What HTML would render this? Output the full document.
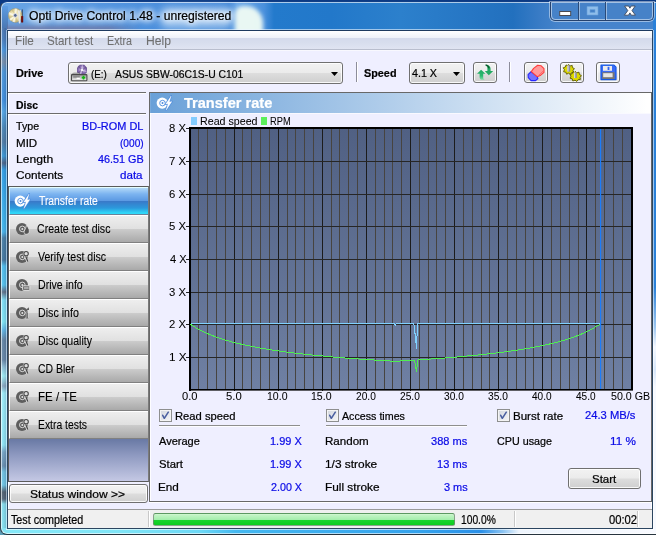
<!DOCTYPE html>
<html lang="en"><head><meta charset="utf-8"><title>Opti Drive Control 1.48 - unregistered</title>
<style>
html,body{margin:0;padding:0}
body{width:656px;height:535px;overflow:hidden;position:relative;font:12px/24px 'Liberation Sans', Arial, sans-serif;color:#000}
div,span,i,svg{position:absolute;box-sizing:border-box}
.t{white-space:pre;line-height:24px;transform-origin:0 50%;font-size:12px;-webkit-text-stroke:0.22px currentColor}
/* --- aero frame --- */
body{background:linear-gradient(180deg,#0b3a84 0,#0b3a84 300px,#5a9cb6 300px)}
#win{left:0;top:1px;width:680px;height:534px;border:1px solid #39454f;border-top-color:#123f86;border-bottom-color:#27343e;border-radius:7px;overflow:hidden;box-shadow:inset 0 0 0 1px rgba(255,255,255,.62);
background:
 linear-gradient(180deg,#5c9ce2 0px,#4a78b4 22px,#4a80c0 34px,#4a98e0 44px,#7890ac 56px,#4a98dc 66px,#3f90e0 94px,#52a8e8 106px,#4a88b8 122px,#4e7ca6 136px,#3a9ad8 150px,#4a6488 157px,#30a0e8 164px,#40b8f0 220px,#48b4ec 226px,#4880a8 232px,#4478a0 254px,#50c0f0 260px,#54c4f0 279px,#607088 286px,#80e0f8 294px,#80e8f8 316px,#60b8e8 324px,#6486a6 334px,#6888a8 354px,#90c0d8 361px,#a0f0f8 370px,#8aa8c0 380px,#a0f0fc 387px,#90e8f8 439px,#78a8c8 446px,#6890b0 460px,#70c4e4 466px,#70c8e8 479px,#506070 486px,#56687a 493px,#88e0f0 498px,#86e4f4 528px) 0 4px/7px 530px no-repeat,
 linear-gradient(180deg,#2a80d8 0,#2a80d8 285px,#9cc6f0 325px,#f4f8ff 345px,#d6e6fa 368px,#f6f9ff 385px,#f8faff 532px) 652px 0/30px 532px no-repeat,
 linear-gradient(90deg,#86e8f8 0,#7fe4f6 120px,#6cd8f6 200px,#44b8f0 235px,#3cacee 330px,#34a2ec 420px,#2a90e8 480px,#8cc4f2 502px,#eef5fd 518px,#f8faff 654px) 0 526px/680px 8px no-repeat,
 linear-gradient(90deg,#6aa6e6 0,#5b9be2 60px,#4a8edc 160px,#4288d8 228px,#6aa8e8 236px,#4a90dc 263px,#237acc 273px,#2278ca 330px,#2c80cc 400px,#2676c4 470px,#2270be 512px,#3a7cc6 540px,#4684cc 560px,#4684cc 656px) 0 0/680px 30px no-repeat,
 #2c7ccc}
#band{left:7px;top:20px;width:135px;height:10px;background:linear-gradient(180deg,rgba(120,115,150,0) 0,rgba(120,115,150,.18) 4px,rgba(118,112,150,.6) 8px,rgba(118,112,150,.6) 10px);-webkit-mask-image:linear-gradient(90deg,#000 0,#000 75%,transparent 100%);mask-image:linear-gradient(90deg,#000 0,#000 75%,transparent 100%)}
#blob2{left:160px;top:7px;width:72px;height:22px;background:rgba(236,248,255,.5);border-radius:8px;filter:blur(4px)}
#blob{left:235px;top:6px;width:28px;height:28px;background:#effbf4;border-radius:8px 17px 0 0;filter:blur(2px);opacity:.96}
#fl2{left:6px;top:30px;width:1px;height:500px;background:rgba(225,240,255,.55)}
#fl3{left:2px;top:28px;width:4px;height:500px;background:linear-gradient(90deg,rgba(255,255,255,.06),rgba(20,30,60,.16))}
#fr2{left:653px;top:30px;width:1px;height:499px;background:rgba(255,255,255,.55)}
#ft2{left:7px;top:29px;width:646px;height:1px;background:rgba(235,245,255,.62)}
#fb2{left:6px;top:529px;width:648px;height:1px;background:rgba(255,255,255,.6)}
#cl{left:7px;top:30px;width:646px;height:499px;border:1px solid #2b4560;border-top-color:#1d3a60;background:#efefff}
#cl:before{content:"";position:absolute;left:0;top:0;width:644px;height:497px;border:1px solid #fff;box-sizing:border-box}
/* caption buttons */
#cap{left:550px;top:2px;width:104px;height:19px;border:1px solid #25426e;border-top:0;border-radius:0 0 5px 5px;background:#4682c8;box-shadow:0 0 0 1px rgba(255,255,255,.45)}
#cap:before{content:"";position:absolute;left:0;top:0;width:102px;height:18px;border:1px solid rgba(255,255,255,.5);border-radius:0 0 4px 4px;box-sizing:border-box}
#cap b{position:absolute;top:0;width:1px;height:18px;background:#2a4a78;box-shadow:1px 0 0 rgba(255,255,255,.45)}
/* menu */
#menu{left:8px;top:31px;width:644px;height:20px;background:linear-gradient(180deg,#fff 0,#fdfdff 1px,#eef1f9 7px,#d4daec 7px,#d8deee 12px,#e0e4f2 18px,#b9bece 18px,#b9bece 19px,#f8f8fe 19px)}
/* buttons */
.btn{border:1px solid #707070;border-radius:3px;background:linear-gradient(180deg,#f2f2f2 0,#ebebeb 48%,#dddddd 52%,#cfcfcf 100%);box-shadow:inset 0 0 0 1px rgba(255,255,255,.85)}
.vsep{width:1px;background:#8c8c9a;box-shadow:1px 0 0 #fff}
.arrow{width:7px;height:4px;background:#000;clip-path:polygon(0 0,100% 0,50% 100%)}
.hl{height:1px;background:#6c6c6c;box-shadow:0 1px 0 #fdfdff}
/* sidebar */
#side{left:8px;top:186px;width:141px;height:296px;border:1px solid #5a5a5a;border-right-color:#7a7a7a;background:linear-gradient(180deg,#6b7ba6 0,#6b7ba6 253px,#8e99c0 268px,#c4c8e4 294px)}
.sb{left:9px;width:139px;height:28px;border-bottom:1px solid #808080;border-left:1px solid #fff;background:linear-gradient(180deg,#eeeeee 0,#eeeeee 1px,#e0e0e0 14px,#cccccc 14px,#a9a9a9 27px);box-shadow:inset 0 1px 0 #fff}
.sb.sel{border-left-color:#c8f0ff;border-bottom-color:#6a8298;background:linear-gradient(180deg,#b6dcfa 0,#b2d8f8 1px,#7cb4f0 7px,#5a98e2 14px,#3a78c8 14px,#2c98dc 21px,#2fd8f8 26px,#2fd8f8 27px);box-shadow:inset 0 1px 0 #e4fdff}
.sb i{left:4px;top:6px;width:18px;height:16px}
/* panel */
#panel{left:149px;top:92px;width:503px;height:410px;border:1px solid #686868;background:#efefff;box-shadow:inset 1px 0 0 rgba(255,255,255,.85),0 1px 0 rgba(255,255,255,.9)}
#phead{left:150px;top:93px;width:501px;height:20px;box-shadow:inset 1px 0 0 rgba(255,255,255,.12),0 1px 0 rgba(255,255,255,.6);background:linear-gradient(90deg,#69a0d8 0,#ffffff 497px)}
.cb{width:13px;height:13px;border:1px solid #8e8f8f;background:linear-gradient(135deg,#d2d6de 0,#f6f6f8 100%);box-shadow:inset 0 0 0 1px #f4f4f4}
.cb svg{left:0;top:0}
/* status */
#status{left:8px;top:509px;width:644px;height:19px;border-top:1px solid #9a9a9a;background:#f0f0f0}
#prog{left:153px;top:513px;width:302px;height:13px;border-radius:2.5px;border:1px solid rgba(120,135,120,.75);background:linear-gradient(180deg,#d6f9d6 0,#c2f5c4 1px,#a6eeae 5.5px,#1ad52e 6px,#0ccc20 11px)}
</style></head>
<body>
<div id="win"></div><div id="band"></div><div id="blob2"></div><div id="blob"></div><div id="fl2"></div><div id="fl3"></div><div id="fr2"></div><div id="fb2"></div><div id="ft2"></div>
<div id="cap"><b style="left:27px"></b><b style="left:54px"></b>
<svg width="102" height="20" viewBox="0 0 102 20" style="left:0;top:-2px">
<rect x="8.7" y="11.5" width="11" height="4" fill="#fff" stroke="#4a4a52" stroke-width="1"/>
<path d="M36 6.5h11v8.5h-11z M39 9.5v3h5v-3z" fill="#8fbdea" fill-rule="evenodd" stroke="#6aa2dc" stroke-width="0.6"/>
<path d="M73.6 6 L77.6 6 L78.9 8.2 L80.2 6 L84.2 6 L81 10.6 L84.4 15.2 L80.3 15.2 L78.9 12.9 L77.5 15.2 L73.4 15.2 L76.8 10.6 Z" fill="#fff" stroke="#3f4a5c" stroke-width="0.9" stroke-linejoin="round"/>
</svg></div>
<svg width="18" height="18" viewBox="0 0 18 18" style="left:8px;top:7px">
<defs><radialGradient id="cd" cx="0.45" cy="0.5" r="0.55"><stop offset="0" stop-color="#fffbe6"/><stop offset="0.5" stop-color="#efe4b4"/><stop offset="1" stop-color="#c9bb84"/></radialGradient></defs>
<circle cx="7.4" cy="8.4" r="7" fill="url(#cd)" stroke="#9a906a" stroke-width="0.5"/>
<path d="M7.4 8.4 L1.2 5 L0.6 7.6 Z M7.4 8.4 L4.4 14.8 L6.8 15.3 Z M7.4 8.4 L9.4 1.7 L6.6 1.5 Z M7.4 8.4 L1.4 12 L2.8 13.8 Z" fill="#fffdf0" opacity=".75"/>
<path d="M7.4 8.4 L3 2.8 L5 1.9 Z M7.4 8.4 L0.5 9.4 L1 11.4 Z M7.4 8.4 L8 15.4 L10.4 14.8 Z" fill="#b9aa6c" opacity=".45"/>
<circle cx="7.3" cy="8.4" r="1.9" fill="#56688e" stroke="#e4e4ee" stroke-width="0.9"/>
<path d="M10 3.2 L10.5 5.6 M12.3 3.2 L11.8 5.6" stroke="#f0f0f0" stroke-width="1.1"/>
<path d="M11.1 5 L11.6 15.6" stroke="#e6e6e6" stroke-width="1.7" stroke-linecap="round"/>
<path d="M14.3 2.4 L14.3 9" stroke="#36465a" stroke-width="1"/>
<rect x="13.1" y="8.9" width="2.1" height="6.5" rx="0.5" fill="#6c0a0a"/>
</svg>
<div id="cl"></div>
<div id="menu"></div>

<!-- toolbar -->
<div class="btn" style="left:68px;top:62px;width:275px;height:22px"></div>
<div class="arrow" style="left:331px;top:72px"></div>
<svg width="18" height="18" viewBox="0 0 18 18" style="left:70px;top:64px">
<defs><radialGradient id="pd" cx="0.5" cy="0.5" r="0.5"><stop offset="0" stop-color="#fff"/><stop offset="0.22" stop-color="#cdbbe4"/><stop offset="0.7" stop-color="#8e74b6"/><stop offset="1" stop-color="#6f5798"/></radialGradient>
<linearGradient id="db" x1="0" y1="0" x2="0" y2="1"><stop offset="0" stop-color="#9c9c9c"/><stop offset="0.5" stop-color="#c8c8c8"/><stop offset="1" stop-color="#ececec"/></linearGradient></defs>
<path d="M9.8 0.8 L14.2 0.8 L17 3.8 L17 8.2 L14.2 11 L9.8 11 L7 8.2 L7 3.8 Z" fill="url(#pd)"/>
<path d="M12 6 L8.2 2 M12 6 L16.2 3.2 M12 6 L13.2 10.6 M12 6 L8 9" stroke="#56407e" stroke-width="1.5" opacity=".5"/>
<path d="M12 6 L12.4 1.2 M12 6 L16.6 7.6 M12 6 L10 10.6" stroke="#e6dcf4" stroke-width="1.3" opacity=".55"/>
<circle cx="12" cy="6" r="1.1" fill="#fff"/>
<path d="M3.4 9 L9.4 9 L9.4 10.6 L1.8 10.6 Z" fill="#b8b8b8" stroke="#6a6a6a" stroke-width="0.5"/>
<rect x="1.5" y="10.6" width="15.4" height="6.1" rx="0.7" fill="url(#db)" stroke="#4a4a4a" stroke-width="1.1"/>
<rect x="3.2" y="12.4" width="6.6" height="1.1" fill="#6e6e6e"/><rect x="6.6" y="13.7" width="3.2" height="1.3" fill="#fff"/>
<path d="M13.5 11.8 v3.6 M11.7 13.6 h3.6" stroke="#14b414" stroke-width="1.6"/>
</svg>
<div class="vsep" style="left:356px;top:62px;height:20px"></div>
<div class="btn" style="left:409px;top:62px;width:56px;height:22px"></div>
<div class="arrow" style="left:453px;top:72px"></div>
<div class="btn" style="left:473px;top:62px;width:24px;height:21px"></div>
<svg width="24" height="21" viewBox="0 0 24 21" style="left:473px;top:62px">
<defs><linearGradient id="ga" x1="0" y1="0" x2="0" y2="1"><stop offset="0" stop-color="#1fa862"/><stop offset="0.6" stop-color="#2cba70"/><stop offset="1" stop-color="#7fe0a8"/></linearGradient></defs>
<path d="M8.1 7.8 L12.4 11.8 L10.2 11.8 L10.2 15.4 C10.2 16.8 10.8 17.4 12 17.8 L8.4 17.8 C7.2 17.4 6.6 16.4 6.6 15 L6.6 11.8 L4 11.8 Z" fill="url(#ga)"/>
<path d="M12.6 3 C16 3 17.6 4.4 17.6 6.8 L17.6 9 L20.2 9 L15.8 13.2 L11.8 9 L14.4 9 L14.4 6.8 C14.4 4.8 13.8 3.8 12.6 3 Z" fill="#22aa62"/>
<path d="M12.6 3 C14.6 3.2 15.8 4.2 16 6.4" stroke="#0b5f30" stroke-width="1.3" fill="none"/>
</svg>
<div class="vsep" style="left:509px;top:62px;height:20px"></div>
<div class="btn" style="left:524px;top:62px;width:24px;height:21px"></div>
<svg width="24" height="21" viewBox="0 0 24 21" style="left:524px;top:62px">
<path d="M7.1 9.6 L4.1 12.7 L4.3 15.7 L7.1 18.6 L11.6 18.6 L13.9 16.5 L13.2 14.7 Z" fill="#7272ff" stroke="#2626ff" stroke-width="1.1" stroke-linejoin="round"/>
<path d="M7.3 9.6 L9.6 6.4 L13.7 3.3 L17.2 3.8 L20 6.6 L20 10.4 L16.2 13.6 L13.2 14.7 Z" fill="#ff9a9a" stroke="#ff3c3c" stroke-width="1.1" stroke-linejoin="round"/>
<path d="M14.6 13.4 L19.6 8.6" stroke="#ff5c5c" stroke-width="0.8" fill="none"/>
</svg>
<div class="btn" style="left:560px;top:62px;width:24px;height:21px"></div>
<svg width="24" height="21" viewBox="0 0 24 21" style="left:560px;top:62px">
<g fill="#dcd800" stroke="#5e5a00" stroke-width="0.9" stroke-linejoin="round">
<path d="M8.6 2.4 L10 4 L12.2 3.4 L12.4 5.6 L14.4 6.6 L13 8.4 L13.8 10.4 L11.6 10.6 L10.4 12.4 L8.6 11.2 L6.6 12.2 L5.8 10.2 L3.6 9.8 L4.4 7.6 L3.2 5.8 L5.4 5 L6 3 L8 3.6 Z"/>
<path d="M15.2 9.4 L16.8 10.8 L19 10.2 L19.4 12.4 L21.4 13.6 L20 15.4 L20.4 17.4 L18.2 17.6 L16.8 19.4 L15 18.2 L12.8 19 L12.2 16.8 L10 16.2 L11 14.2 L10 12.4 L12.2 11.8 L12.8 9.8 L14.6 10.6 Z"/>
</g>
<rect x="7.4" y="3.4" width="2.8" height="6.2" fill="#8c8ca0"/><rect x="7.4" y="3.4" width="1.1" height="6.2" fill="#e4e4f0"/>
<rect x="14.2" y="10.4" width="2.6" height="5.6" fill="#8c8ca0"/><rect x="14.2" y="10.4" width="1" height="5.6" fill="#e4e4f0"/>
</svg>
<div class="btn" style="left:596px;top:62px;width:24px;height:21px;background:linear-gradient(180deg,#fbfbfb 0,#f4f4f4 48%,#ececec 52%,#e6e6e6 100%)"></div>
<svg width="24" height="21" viewBox="0 0 24 21" style="left:596px;top:62px">
<path d="M5 3.2 L18 3.2 L20 5.2 L20 17.6 L5 17.6 Z" fill="#3b6cf6" stroke="#1458e4" stroke-width="1.2" stroke-linejoin="round"/>
<rect x="7" y="4" width="9" height="4.8" fill="#ececec"/><rect x="11.6" y="4.8" width="1.8" height="3.2" fill="#2f62f2"/>
<rect x="6.2" y="10.2" width="12.4" height="6.8" fill="#767676"/><rect x="7.2" y="11.2" width="9.4" height="4" fill="#e6e6e6"/>
</svg>

<!-- left info -->
<div class="hl" style="left:8px;top:92px;width:138px"></div>
<div class="hl" style="left:8px;top:113px;width:138px"></div>
<div id="side"></div>
<div class="sb sel" style="top:187px"><i><svg width="18" height="16" viewBox="0 0 18 16"><circle cx="6.2" cy="8.1" r="5.6" fill="#fff"/><circle cx="6.5" cy="8.1" r="2.8" fill="none" stroke="#4a8ade" stroke-width="0.9"/><circle cx="6.5" cy="8.1" r="1" fill="#4a8ade"/><path d="M15.1 1 L9.6 9.2 L12.1 8.8 L10 15.4 L15.9 6.6 L13.3 7.1 Z" fill="none" stroke="#4486dc" stroke-width="1.7" stroke-linejoin="round"/><path d="M15.1 1 L9.6 9.2 L12.1 8.8 L10 15.4 L15.9 6.6 L13.3 7.1 Z" fill="#fff" stroke="#fff" stroke-width="0.35" stroke-linejoin="round"/></svg></i></div>
<div class="sb" style="top:215px"><i><svg width="18" height="16" viewBox="0 0 18 16"><circle cx="8.0" cy="7.9" r="6.0" fill="#5e5e5e"/><circle cx="8.3" cy="7.9" r="2.8" fill="none" stroke="#e4e4e4" stroke-width="0.9"/><circle cx="8.3" cy="7.9" r="1" fill="#e4e4e4"/><path d="M12.4 4.4 C15 7 16 9.6 15 11.8 C14.2 13.6 11.6 13.8 10.4 12.4 C9.2 10.8 10.8 9.2 11.6 7.4 Z" fill="#555" stroke="#e6e6e6" stroke-width="0.8"/></svg></i></div>
<div class="sb" style="top:243px"><i><svg width="18" height="16" viewBox="0 0 18 16"><circle cx="8.0" cy="7.9" r="6.0" fill="#5e5e5e"/><circle cx="8.3" cy="7.9" r="2.8" fill="none" stroke="#e4e4e4" stroke-width="0.9"/><circle cx="8.3" cy="7.9" r="1" fill="#e4e4e4"/><circle cx="12.1" cy="4.7" r="3" fill="#e4e4e4"/><circle cx="12.1" cy="4.7" r="2.2" fill="#dcdcdc" stroke="#484848" stroke-width="1.1"/><path d="M11.5 7.4 L13.6 12.4" stroke="#e2e2e2" stroke-width="2.6"/><path d="M11.7 7.2 L13.8 12.4" stroke="#484848" stroke-width="1.3"/></svg></i></div>
<div class="sb" style="top:271px"><i><svg width="18" height="16" viewBox="0 0 18 16"><circle cx="8.0" cy="7.9" r="6.0" fill="#5e5e5e"/><circle cx="8.3" cy="7.9" r="2.8" fill="none" stroke="#e4e4e4" stroke-width="0.9"/><circle cx="8.3" cy="7.9" r="1" fill="#e4e4e4"/><rect x="8.6" y="8.8" width="7.2" height="4.6" rx="0.8" fill="#6a6a6a" stroke="#e6e6e6" stroke-width="0.9"/><rect x="10" y="10.5" width="4.6" height="1" fill="#e6e6e6"/></svg></i></div>
<div class="sb" style="top:299px"><i><svg width="18" height="16" viewBox="0 0 18 16"><circle cx="8.0" cy="7.9" r="6.0" fill="#5e5e5e"/><circle cx="8.3" cy="7.9" r="2.8" fill="none" stroke="#e4e4e4" stroke-width="0.9"/><circle cx="8.3" cy="7.9" r="1" fill="#e4e4e4"/><path d="M11.6 7 L14 7 L14 12.8 L15.2 12.8 L15.2 13.8 L11.2 13.8 L11.2 12.8 L12.2 12.8 L12.2 8 L11.6 8 Z" fill="#484848" stroke="#e6e6e6" stroke-width="0.6"/><path d="M12.4 4.8 L14.6 2.2 L15 5 Z" fill="#484848"/></svg></i></div>
<div class="sb" style="top:327px"><i><svg width="18" height="16" viewBox="0 0 18 16"><circle cx="8.0" cy="7.9" r="6.0" fill="#5e5e5e"/><circle cx="8.3" cy="7.9" r="2.8" fill="none" stroke="#e4e4e4" stroke-width="0.9"/><circle cx="8.3" cy="7.9" r="1" fill="#e4e4e4"/><circle cx="12.1" cy="4.7" r="3" fill="#e4e4e4"/><circle cx="12.1" cy="4.7" r="2.2" fill="#dcdcdc" stroke="#484848" stroke-width="1.1"/><path d="M11.5 7.4 L13.6 12.4" stroke="#e2e2e2" stroke-width="2.6"/><path d="M11.7 7.2 L13.8 12.4" stroke="#484848" stroke-width="1.3"/></svg></i></div>
<div class="sb" style="top:355px"><i><svg width="18" height="16" viewBox="0 0 18 16"><circle cx="8.0" cy="7.9" r="6.0" fill="#5e5e5e"/><circle cx="8.3" cy="7.9" r="2.8" fill="none" stroke="#e4e4e4" stroke-width="0.9"/><circle cx="8.3" cy="7.9" r="1" fill="#e4e4e4"/><circle cx="12.1" cy="4.7" r="3" fill="#e4e4e4"/><circle cx="12.1" cy="4.7" r="2.2" fill="#dcdcdc" stroke="#484848" stroke-width="1.1"/><path d="M11.5 7.4 L13.6 12.4" stroke="#e2e2e2" stroke-width="2.6"/><path d="M11.7 7.2 L13.8 12.4" stroke="#484848" stroke-width="1.3"/></svg></i></div>
<div class="sb" style="top:383px"><i><svg width="18" height="16" viewBox="0 0 18 16"><circle cx="8.0" cy="7.9" r="6.0" fill="#5e5e5e"/><circle cx="8.3" cy="7.9" r="2.8" fill="none" stroke="#e4e4e4" stroke-width="0.9"/><circle cx="8.3" cy="7.9" r="1" fill="#e4e4e4"/><circle cx="12.1" cy="4.7" r="3" fill="#e4e4e4"/><circle cx="12.1" cy="4.7" r="2.2" fill="#dcdcdc" stroke="#484848" stroke-width="1.1"/><path d="M11.5 7.4 L13.6 12.4" stroke="#e2e2e2" stroke-width="2.6"/><path d="M11.7 7.2 L13.8 12.4" stroke="#484848" stroke-width="1.3"/></svg></i></div>
<div class="sb" style="top:411px"><i><svg width="18" height="16" viewBox="0 0 18 16"><circle cx="8.0" cy="7.9" r="6.0" fill="#5e5e5e"/><circle cx="8.3" cy="7.9" r="2.8" fill="none" stroke="#e4e4e4" stroke-width="0.9"/><circle cx="8.3" cy="7.9" r="1" fill="#e4e4e4"/><circle cx="12.1" cy="4.7" r="3" fill="#e4e4e4"/><circle cx="12.1" cy="4.7" r="2.2" fill="#dcdcdc" stroke="#484848" stroke-width="1.1"/><path d="M11.5 7.4 L13.6 12.4" stroke="#e2e2e2" stroke-width="2.6"/><path d="M11.7 7.2 L13.8 12.4" stroke="#484848" stroke-width="1.3"/></svg></i></div>
<div class="btn" style="left:9px;top:484px;width:139px;height:19px"></div>

<!-- right panel -->
<div id="panel"></div>
<div id="phead"></div>
<div style="left:156px;top:95px;width:18px;height:16px"><svg width="18" height="16" viewBox="0 0 18 16"><circle cx="6.2" cy="8.1" r="5.6" fill="#fff"/><circle cx="6.5" cy="8.1" r="2.8" fill="none" stroke="#4a8ade" stroke-width="0.9"/><circle cx="6.5" cy="8.1" r="1" fill="#4a8ade"/><path d="M15.1 1 L9.6 9.2 L12.1 8.8 L10 15.4 L15.9 6.6 L13.3 7.1 Z" fill="none" stroke="#4486dc" stroke-width="1.7" stroke-linejoin="round"/><path d="M15.1 1 L9.6 9.2 L12.1 8.8 L10 15.4 L15.9 6.6 L13.3 7.1 Z" fill="#fff" stroke="#fff" stroke-width="0.35" stroke-linejoin="round"/></svg></div>
<svg class="chart" width="656" height="535" viewBox="0 0 656 535" style="position:absolute;left:0;top:0">
<defs><linearGradient id="pg" x1="0" y1="0" x2="0" y2="1"><stop offset="0" stop-color="#506083"/><stop offset="1" stop-color="#6f80a3"/></linearGradient></defs>
<rect x="189" y="127" width="444" height="263" fill="url(#pg)"/>
<line x1="198.5" y1="127" x2="198.5" y2="390" stroke="#474440" stroke-width="1"/>
<line x1="207.5" y1="127" x2="207.5" y2="390" stroke="#474440" stroke-width="1"/>
<line x1="216.5" y1="127" x2="216.5" y2="390" stroke="#474440" stroke-width="1"/>
<line x1="225.5" y1="127" x2="225.5" y2="390" stroke="#474440" stroke-width="1"/>
<line x1="234.5" y1="127" x2="234.5" y2="391" stroke="#1c1c1c" stroke-width="1"/>
<line x1="242.5" y1="127" x2="242.5" y2="390" stroke="#474440" stroke-width="1"/>
<line x1="251.5" y1="127" x2="251.5" y2="390" stroke="#474440" stroke-width="1"/>
<line x1="260.5" y1="127" x2="260.5" y2="390" stroke="#474440" stroke-width="1"/>
<line x1="269.5" y1="127" x2="269.5" y2="390" stroke="#474440" stroke-width="1"/>
<line x1="278.5" y1="127" x2="278.5" y2="391" stroke="#1c1c1c" stroke-width="1"/>
<line x1="287.5" y1="127" x2="287.5" y2="390" stroke="#474440" stroke-width="1"/>
<line x1="295.5" y1="127" x2="295.5" y2="390" stroke="#474440" stroke-width="1"/>
<line x1="304.5" y1="127" x2="304.5" y2="390" stroke="#474440" stroke-width="1"/>
<line x1="313.5" y1="127" x2="313.5" y2="390" stroke="#474440" stroke-width="1"/>
<line x1="322.5" y1="127" x2="322.5" y2="391" stroke="#1c1c1c" stroke-width="1"/>
<line x1="331.5" y1="127" x2="331.5" y2="390" stroke="#474440" stroke-width="1"/>
<line x1="339.5" y1="127" x2="339.5" y2="390" stroke="#474440" stroke-width="1"/>
<line x1="348.5" y1="127" x2="348.5" y2="390" stroke="#474440" stroke-width="1"/>
<line x1="357.5" y1="127" x2="357.5" y2="390" stroke="#474440" stroke-width="1"/>
<line x1="366.5" y1="127" x2="366.5" y2="391" stroke="#1c1c1c" stroke-width="1"/>
<line x1="375.5" y1="127" x2="375.5" y2="390" stroke="#474440" stroke-width="1"/>
<line x1="384.5" y1="127" x2="384.5" y2="390" stroke="#474440" stroke-width="1"/>
<line x1="392.5" y1="127" x2="392.5" y2="390" stroke="#474440" stroke-width="1"/>
<line x1="401.5" y1="127" x2="401.5" y2="390" stroke="#474440" stroke-width="1"/>
<line x1="410.5" y1="127" x2="410.5" y2="391" stroke="#1c1c1c" stroke-width="1"/>
<line x1="419.5" y1="127" x2="419.5" y2="390" stroke="#474440" stroke-width="1"/>
<line x1="428.5" y1="127" x2="428.5" y2="390" stroke="#474440" stroke-width="1"/>
<line x1="436.5" y1="127" x2="436.5" y2="390" stroke="#474440" stroke-width="1"/>
<line x1="445.5" y1="127" x2="445.5" y2="390" stroke="#474440" stroke-width="1"/>
<line x1="454.5" y1="127" x2="454.5" y2="391" stroke="#1c1c1c" stroke-width="1"/>
<line x1="463.5" y1="127" x2="463.5" y2="390" stroke="#474440" stroke-width="1"/>
<line x1="472.5" y1="127" x2="472.5" y2="390" stroke="#474440" stroke-width="1"/>
<line x1="481.5" y1="127" x2="481.5" y2="390" stroke="#474440" stroke-width="1"/>
<line x1="489.5" y1="127" x2="489.5" y2="390" stroke="#474440" stroke-width="1"/>
<line x1="498.5" y1="127" x2="498.5" y2="391" stroke="#1c1c1c" stroke-width="1"/>
<line x1="507.5" y1="127" x2="507.5" y2="390" stroke="#474440" stroke-width="1"/>
<line x1="516.5" y1="127" x2="516.5" y2="390" stroke="#474440" stroke-width="1"/>
<line x1="525.5" y1="127" x2="525.5" y2="390" stroke="#474440" stroke-width="1"/>
<line x1="533.5" y1="127" x2="533.5" y2="390" stroke="#474440" stroke-width="1"/>
<line x1="542.5" y1="127" x2="542.5" y2="391" stroke="#1c1c1c" stroke-width="1"/>
<line x1="551.5" y1="127" x2="551.5" y2="390" stroke="#474440" stroke-width="1"/>
<line x1="560.5" y1="127" x2="560.5" y2="390" stroke="#474440" stroke-width="1"/>
<line x1="569.5" y1="127" x2="569.5" y2="390" stroke="#474440" stroke-width="1"/>
<line x1="578.5" y1="127" x2="578.5" y2="390" stroke="#474440" stroke-width="1"/>
<line x1="586.5" y1="127" x2="586.5" y2="391" stroke="#1c1c1c" stroke-width="1"/>
<line x1="595.5" y1="127" x2="595.5" y2="390" stroke="#474440" stroke-width="1"/>
<line x1="604.5" y1="127" x2="604.5" y2="390" stroke="#474440" stroke-width="1"/>
<line x1="613.5" y1="127" x2="613.5" y2="390" stroke="#474440" stroke-width="1"/>
<line x1="622.5" y1="127" x2="622.5" y2="390" stroke="#474440" stroke-width="1"/>
<line x1="186" y1="357.5" x2="633" y2="357.5" stroke="#262626" stroke-width="1"/>
<line x1="186" y1="324.5" x2="633" y2="324.5" stroke="#262626" stroke-width="1"/>
<line x1="186" y1="292.5" x2="633" y2="292.5" stroke="#262626" stroke-width="1"/>
<line x1="186" y1="259.5" x2="633" y2="259.5" stroke="#262626" stroke-width="1"/>
<line x1="186" y1="226.5" x2="633" y2="226.5" stroke="#262626" stroke-width="1"/>
<line x1="186" y1="194.5" x2="633" y2="194.5" stroke="#262626" stroke-width="1"/>
<line x1="186" y1="161.5" x2="633" y2="161.5" stroke="#262626" stroke-width="1"/>
<rect x="189" y="127" width="444" height="2" fill="#000"/>
<rect x="189" y="389" width="444" height="1.6" fill="#000"/>
<rect x="189" y="127" width="2" height="264" fill="#000"/>
<rect x="631" y="127" width="2" height="263" fill="#000"/>
<rect x="186" y="128" width="3" height="1" fill="#262626"/>
<polyline fill="none" stroke="#50ee50" stroke-width="1" shape-rendering="crispEdges" points="190.0,324.0 192.5,325.7 195.0,327.2 197.5,328.7 200.0,330.0 202.5,331.3 205.0,332.5 207.5,333.6 210.0,334.7 212.5,335.6 215.0,336.6 217.5,337.5 220.0,338.3 222.5,339.2 225.0,339.9 227.5,340.7 230.0,341.4 232.5,342.1 235.0,342.7 237.5,343.3 240.0,343.9 242.5,344.5 245.0,345.1 247.5,345.6 250.0,346.1 252.5,346.6 255.0,347.1 257.5,347.6 260.0,348.0 262.5,348.5 265.0,348.9 267.5,349.3 270.0,349.7 272.5,350.1 275.0,350.5 277.5,350.8 280.0,351.2 282.5,351.5 285.0,351.9 287.5,352.2 290.0,352.5 292.5,352.8 295.0,353.1 297.5,353.4 300.0,353.7 302.5,354.0 305.0,354.3 307.5,354.5 310.0,354.8 312.5,355.1 315.0,355.3 317.5,355.6 320.0,355.8 322.5,356.0 325.0,356.3 327.5,356.5 330.0,356.7 332.5,356.9 335.0,357.2 337.5,357.4 340.0,357.6 342.5,357.8 345.0,358.0 347.5,358.2 350.0,358.4 352.5,358.5 355.0,358.7 357.5,358.9 360.0,359.1 362.5,359.3 365.0,359.4 367.5,359.6 370.0,359.8 372.5,359.9 375.0,360.1 377.5,360.3 380.0,360.4 382.5,360.6 385.0,360.7 387.5,360.9 390.0,361.0 392.5,361.2 395.0,361.3 399.2,361.3 399.8,361.0 402.0,360.9 404.5,360.7 407.0,360.6 409.5,360.4 412.0,360.3 414.5,360.3 416.6,371.6 417.7,360.0 420.0,359.8 422.5,359.6 425.0,359.4 427.5,359.3 430.0,359.1 432.5,358.9 435.0,358.7 437.5,358.5 440.0,358.4 442.5,358.2 445.0,358.0 447.5,357.8 450.0,357.6 452.5,357.4 455.0,357.2 457.5,356.9 460.0,356.7 462.5,356.5 465.0,356.3 467.5,356.0 470.0,355.8 472.5,355.6 475.0,355.3 477.5,355.1 480.0,354.8 482.5,354.5 485.0,354.3 487.5,354.0 490.0,353.7 492.5,353.4 495.0,353.1 497.5,352.8 500.0,352.5 502.5,352.2 505.0,351.9 507.5,351.5 510.0,351.2 512.5,350.8 515.0,350.5 517.5,350.1 520.0,349.7 522.5,349.3 525.0,348.9 527.5,348.5 530.0,348.0 532.5,347.6 535.0,347.1 537.5,346.6 540.0,346.1 542.5,345.6 545.0,345.1 547.5,344.5 550.0,343.9 552.5,343.3 555.0,342.7 557.5,342.1 560.0,341.4 562.5,340.7 565.0,339.9 567.5,339.2 570.0,338.3 572.5,337.5 575.0,336.6 577.5,335.6 580.0,334.7 582.5,333.6 585.0,332.5 587.5,331.3 590.0,330.0 592.5,328.7 595.0,327.2 597.5,325.7 600.3,324.3"/>
<polyline fill="none" stroke="#80d2ff" stroke-width="1" shape-rendering="crispEdges" points="190.5,323.7 394.3,323.7 395.2,325.5 396.0,323.7 413.9,323.7 415.3,336.0 416.6,348.8 417.0,336.0 417.9,323.7 600.3,323.7"/>
<rect x="600" y="129" width="1.15" height="260" fill="#1b7dfa"/>
<rect x="191" y="117" width="6" height="8" fill="#84ccff"/>
<rect x="261" y="117" width="6" height="8" fill="#5cf05c"/>
</svg>
<div class="cb" style="left:159px;top:409px"><svg width="11" height="11" viewBox="0 0 11 11"><path d="M2.7 5.3 L4.3 8.3 L8.3 2.2" fill="none" stroke="#4a5fa0" stroke-width="1.55" stroke-linecap="round" stroke-linejoin="round"/></svg></div><div class="cb" style="left:326px;top:409px"><svg width="11" height="11" viewBox="0 0 11 11"><path d="M2.7 5.3 L4.3 8.3 L8.3 2.2" fill="none" stroke="#4a5fa0" stroke-width="1.55" stroke-linecap="round" stroke-linejoin="round"/></svg></div><div class="cb" style="left:497px;top:409px"><svg width="11" height="11" viewBox="0 0 11 11"><path d="M2.7 5.3 L4.3 8.3 L8.3 2.2" fill="none" stroke="#4a5fa0" stroke-width="1.55" stroke-linecap="round" stroke-linejoin="round"/></svg></div>
<div class="hl" style="left:159px;top:425px;width:141px;background:#8e8e8e"></div>
<div class="hl" style="left:326px;top:425px;width:141px;background:#8e8e8e"></div>
<div class="btn" style="left:568px;top:468px;width:73px;height:21px"></div>

<!-- status bar -->
<div id="status"></div>
<div class="vsep" style="left:148px;top:511px;height:16px;background:#c8c8c8"></div>
<div id="prog"></div>
<div class="vsep" style="left:514px;top:511px;height:16px;background:#c8c8c8"></div>
<div class="vsep" style="left:637px;top:511px;height:16px;background:#c8c8c8"></div>

<span class="t" style="left:28.68px;top:4.00px;transform:scaleX(1.0149);text-shadow:0 0 5px #fff,0 0 6px #fff,0 0 8px #fff,0 0 10px rgba(255,255,255,.9);">Opti Drive Control 1.48 - unregistered</span>
<span class="t" style="left:14.71px;top:29.00px;transform:scaleX(0.9751);color:#707070;-webkit-text-stroke:0.08px;">File</span>
<span class="t" style="left:46.73px;top:29.00px;transform:scaleX(0.9630);color:#707070;-webkit-text-stroke:0.08px;">Start test</span>
<span class="t" style="left:106.60px;top:29.00px;transform:scaleX(0.8949);color:#707070;-webkit-text-stroke:0.08px;">Extra</span>
<span class="t" style="left:145.67px;top:29.00px;transform:scaleX(1.0105);color:#707070;-webkit-text-stroke:0.08px;">Help</span>
<span class="t" style="left:15.87px;top:61.00px;transform:scaleX(0.9902);font-size:11px;font-weight:bold;">Drive</span>
<span class="t" style="left:90.94px;top:62.00px;transform:scaleX(0.8935);font-size:11px;">(E:)</span>
<span class="t" style="left:114.99px;top:62.00px;transform:scaleX(0.9426);font-size:11px;">ASUS SBW-06C1S-U C101</span>
<span class="t" style="left:363.68px;top:61.00px;transform:scaleX(0.9842);font-size:11px;font-weight:bold;">Speed</span>
<span class="t" style="left:412.48px;top:61.00px;transform:scaleX(0.9726);font-size:11px;">4.1 X</span>
<span class="t" style="left:15.61px;top:93.00px;transform:scaleX(0.9438);font-size:11px;font-weight:bold;">Disc</span>
<span class="t" style="left:16.02px;top:114.00px;transform:scaleX(0.9682);font-size:11px;">Type</span>
<span class="t" style="left:81.87px;top:114.00px;transform:scaleX(0.9945);font-size:11px;color:#0a0ae6;">BD-ROM DL</span>
<span class="t" style="left:15.63px;top:131.00px;transform:scaleX(1.0512);font-size:11px;">MID</span>
<span class="t" style="left:120.02px;top:131.00px;transform:scaleX(0.9207);font-size:11px;color:#0a0ae6;">(000)</span>
<span class="t" style="left:15.58px;top:147.00px;transform:scaleX(1.1069);font-size:11px;">Length</span>
<span class="t" style="left:97.78px;top:147.00px;transform:scaleX(0.9841);font-size:11px;color:#0a0ae6;">46.51 GB</span>
<span class="t" style="left:15.82px;top:163.00px;transform:scaleX(1.0709);font-size:11px;">Contents</span>
<span class="t" style="left:120.39px;top:163.00px;transform:scaleX(1.0524);font-size:11px;color:#0a0ae6;">data</span>
<span class="t" style="left:39.12px;top:189.00px;transform:scaleX(0.8613);color:#fff;-webkit-text-stroke:0.1px;">Transfer rate</span>
<span class="t" style="left:37.22px;top:217.00px;transform:scaleX(0.8810);-webkit-text-stroke:0.1px;">Create test disc</span>
<span class="t" style="left:38.01px;top:245.00px;transform:scaleX(0.8796);-webkit-text-stroke:0.1px;">Verify test disc</span>
<span class="t" style="left:38.01px;top:273.00px;transform:scaleX(0.8829);-webkit-text-stroke:0.1px;">Drive info</span>
<span class="t" style="left:38.01px;top:301.00px;transform:scaleX(0.8883);-webkit-text-stroke:0.1px;">Disc info</span>
<span class="t" style="left:38.02px;top:329.00px;transform:scaleX(0.8802);-webkit-text-stroke:0.1px;">Disc quality</span>
<span class="t" style="left:37.63px;top:357.00px;transform:scaleX(0.8687);-webkit-text-stroke:0.1px;">CD Bler</span>
<span class="t" style="left:37.93px;top:385.00px;transform:scaleX(0.9615);-webkit-text-stroke:0.1px;">FE / TE</span>
<span class="t" style="left:38.03px;top:413.00px;transform:scaleX(0.8654);-webkit-text-stroke:0.1px;">Extra tests</span>
<span class="t" style="left:29.69px;top:482.00px;transform:scaleX(1.0952);font-size:11px;">Status window &gt;&gt;</span>
<span class="t" style="left:10.51px;top:508.00px;transform:scaleX(0.8956);">Test completed</span>
<span class="t" style="left:461.07px;top:508.00px;transform:scaleX(0.8541);">100.0%</span>
<span class="t" style="left:608.70px;top:508.00px;transform:scaleX(0.9346);">00:02</span>
<span class="t" style="left:184.34px;top:91.00px;transform:scaleX(1.0402);font-size:14px;font-weight:bold;color:#fff;">Transfer rate</span>
<span class="t" style="left:174.85px;top:404.00px;transform:scaleX(1.0181);font-size:11px;">Read speed</span>
<span class="t" style="left:342.08px;top:404.00px;transform:scaleX(0.9710);font-size:11px;">Access times</span>
<span class="t" style="left:512.83px;top:404.00px;transform:scaleX(1.0497);font-size:11px;">Burst rate</span>
<span class="t" style="left:584.69px;top:403.00px;transform:scaleX(1.0184);font-size:11px;color:#0a0ae6;">24.3 MB/s</span>
<span class="t" style="left:158.97px;top:429.00px;transform:scaleX(1.0025);font-size:11px;">Average</span>
<span class="t" style="left:269.92px;top:429.00px;transform:scaleX(0.9966);font-size:11px;color:#0a0ae6;">1.99 X</span>
<span class="t" style="left:158.54px;top:452.00px;transform:scaleX(1.0268);font-size:11px;">Start</span>
<span class="t" style="left:269.92px;top:452.00px;transform:scaleX(0.9966);font-size:11px;color:#0a0ae6;">1.99 X</span>
<span class="t" style="left:158.41px;top:475.00px;transform:scaleX(1.0676);font-size:11px;">End</span>
<span class="t" style="left:270.62px;top:475.00px;transform:scaleX(0.9745);font-size:11px;color:#0a0ae6;">2.00 X</span>
<span class="t" style="left:325.42px;top:429.00px;transform:scaleX(1.0527);font-size:11px;">Random</span>
<span class="t" style="left:431.14px;top:429.00px;transform:scaleX(1.0022);font-size:11px;color:#0a0ae6;">388 ms</span>
<span class="t" style="left:324.91px;top:452.00px;transform:scaleX(1.0809);font-size:11px;">1/3 stroke</span>
<span class="t" style="left:437.01px;top:452.00px;transform:scaleX(1.0070);font-size:11px;color:#0a0ae6;">13 ms</span>
<span class="t" style="left:325.41px;top:475.00px;transform:scaleX(1.0750);font-size:11px;">Full stroke</span>
<span class="t" style="left:443.54px;top:475.00px;transform:scaleX(0.9946);font-size:11px;color:#0a0ae6;">3 ms</span>
<span class="t" style="left:497.08px;top:429.00px;transform:scaleX(0.9767);font-size:11px;">CPU usage</span>
<span class="t" style="left:609.83px;top:429.00px;transform:scaleX(1.0649);font-size:11px;color:#0a0ae6;">11 %</span>
<span class="t" style="left:591.53px;top:467.00px;transform:scaleX(1.0445);font-size:11px;">Start</span>
<span class="t" style="left:199.79px;top:109.00px;transform:scaleX(0.9697);font-size:11px;-webkit-text-stroke:0.06px;">Read speed</span>
<span class="t" style="left:270.40px;top:109.00px;transform:scaleX(0.8430);font-size:11px;-webkit-text-stroke:0.06px;">RPM</span>
<span class="t" style="left:169.41px;top:116.00px;transform:scaleX(1.0238);font-size:11px;-webkit-text-stroke:0.06px;">8 X</span>
<span class="t" style="left:169.29px;top:149.00px;transform:scaleX(1.0311);font-size:11px;-webkit-text-stroke:0.06px;">7 X</span>
<span class="t" style="left:169.36px;top:182.00px;transform:scaleX(1.0269);font-size:11px;-webkit-text-stroke:0.06px;">6 X</span>
<span class="t" style="left:169.31px;top:214.00px;transform:scaleX(1.0295);font-size:11px;-webkit-text-stroke:0.06px;">5 X</span>
<span class="t" style="left:169.67px;top:247.00px;transform:scaleX(1.0074);font-size:11px;-webkit-text-stroke:0.06px;">4 X</span>
<span class="t" style="left:169.32px;top:280.00px;transform:scaleX(1.0293);font-size:11px;-webkit-text-stroke:0.06px;">3 X</span>
<span class="t" style="left:169.38px;top:312.00px;transform:scaleX(1.0251);font-size:11px;-webkit-text-stroke:0.06px;">2 X</span>
<span class="t" style="left:168.63px;top:345.00px;transform:scaleX(1.0720);font-size:11px;-webkit-text-stroke:0.06px;">1 X</span>
<span class="t" style="left:181.95px;top:384.00px;transform:scaleX(1.0152);font-size:11px;-webkit-text-stroke:0.06px;">0.0</span>
<span class="t" style="left:225.82px;top:384.00px;transform:scaleX(1.0246);font-size:11px;-webkit-text-stroke:0.06px;">5.0</span>
<span class="t" style="left:267.17px;top:384.00px;transform:scaleX(0.9568);font-size:11px;-webkit-text-stroke:0.06px;">10.0</span>
<span class="t" style="left:311.17px;top:384.00px;transform:scaleX(0.9568);font-size:11px;-webkit-text-stroke:0.06px;">15.0</span>
<span class="t" style="left:355.85px;top:384.00px;transform:scaleX(0.9244);font-size:11px;-webkit-text-stroke:0.06px;">20.0</span>
<span class="t" style="left:399.85px;top:384.00px;transform:scaleX(0.9244);font-size:11px;-webkit-text-stroke:0.06px;">25.0</span>
<span class="t" style="left:443.79px;top:384.00px;transform:scaleX(0.9273);font-size:11px;-webkit-text-stroke:0.06px;">30.0</span>
<span class="t" style="left:487.79px;top:384.00px;transform:scaleX(0.9273);font-size:11px;-webkit-text-stroke:0.06px;">35.0</span>
<span class="t" style="left:532.10px;top:384.00px;transform:scaleX(0.9119);font-size:11px;-webkit-text-stroke:0.06px;">40.0</span>
<span class="t" style="left:576.10px;top:384.00px;transform:scaleX(0.9119);font-size:11px;-webkit-text-stroke:0.06px;">45.0</span>
<span class="t" style="left:610.55px;top:384.00px;transform:scaleX(0.9686);font-size:11px;-webkit-text-stroke:0.06px;">50.0 GB</span>
</body></html>
